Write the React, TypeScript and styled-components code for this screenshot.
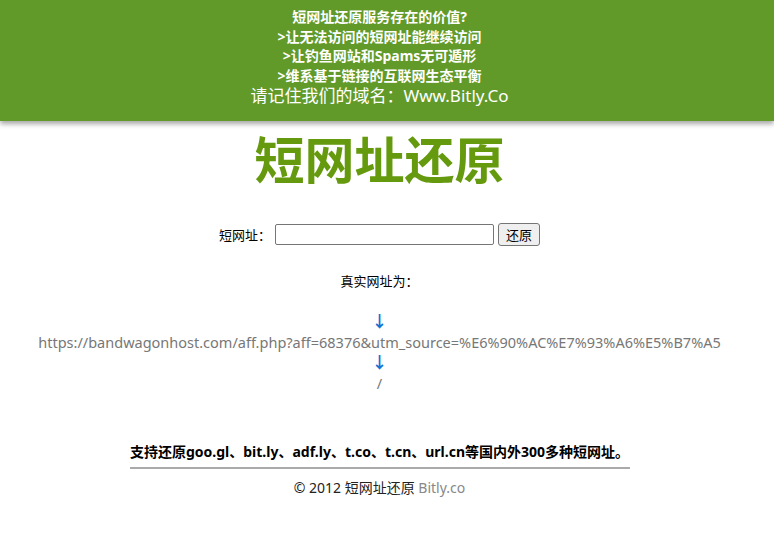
import React, { useState } from 'react';
import { styled, createGlobalStyle } from 'styled-components';

const GlobalStyle = createGlobalStyle`
  html, body {
    margin: 0;
    padding: 0;
    background: #fff;
    font-family: "Noto Sans", "Noto Sans CJK SC", sans-serif;
    color: #000;
  }
`;

// the original page reserves room for a scrollbar on the right
const Header = styled.header`
  background: #629a2a;
  box-shadow: 0 3px 5px rgba(0, 0, 0, 0.35);
  color: #fff;
  text-align: center;
  padding: 7px 15px 14px 0;
`;

const HeaderLine = styled.div<{ big?: boolean }>`
  font-size: ${p => (p.big ? '17px' : '14px')};
  font-weight: ${p => (p.big ? 'normal' : 'bold')};
  line-height: ${p => (p.big ? '22px' : '19.5px')};
`;

const Main = styled.main`
  padding-right: 15px;
`;

const Title = styled.h1`
  margin: 7px 0 0;
  font-size: 50px;
  line-height: 64px;
  font-weight: bold;
  color: #659a0e;
  text-align: center;
`;

const FormRow = styled.form`
  display: flex;
  justify-content: center;
  align-items: center;
  gap: 4px;
  margin-top: 31px;
  font-size: 13px;
`;

const UrlInput = styled.input`
  width: 213px;
  height: 17px;
  border: 1px solid #767676;
  border-radius: 2px;
  padding: 1px 2px;
  font-size: 13px;
`;

const Button = styled.button`
  height: 23px;
  padding: 0 7px;
  border: 1px solid #767676;
  border-radius: 3px;
  background: #efefef;
  font-size: 13px;
  font-family: inherit;
  color: #000;
`;

const Label = styled.div`
  text-align: center;
  font-size: 13px;
  margin-top: 25px;
`;

const Result = styled.div`
  text-align: center;
  margin-top: 21px;
  line-height: 20.6px;
`;

const Arrow = styled.div`
  color: #1173d4;
  font-size: 16px;
  font-weight: bold;
`;

const UrlText = styled.div`
  color: #777;
  font-size: 14.5px;
`;

const Footer = styled.footer`
  width: 500px;
  margin: 49px auto 0;
  text-align: center;
`;

const Support = styled.div`
  font-size: 14px;
  font-weight: bold;
  line-height: 20px;
  padding-bottom: 5px;
  border-bottom: 2px solid #aaa;
`;

const Copy = styled.div`
  font-size: 14px;
  margin-top: 8px;
  color: #222;
`;

const Gray = styled.span`
  color: #888;
`;

export default function App() {
  const [url, setUrl] = useState('');
  return (
    <>
      <GlobalStyle />
      <Header>
        <HeaderLine>短网址还原服务存在的价值?</HeaderLine>
        <HeaderLine>&gt;让无法访问的短网址能继续访问</HeaderLine>
        <HeaderLine>&gt;让钓鱼网站和Spams无可遁形</HeaderLine>
        <HeaderLine>&gt;维系基于链接的互联网生态平衡</HeaderLine>
        <HeaderLine big>请记住我们的域名：Www.Bitly.Co</HeaderLine>
      </Header>
      <Main>
        <Title>短网址还原</Title>
        <FormRow onSubmit={e => e.preventDefault()}>
          <span>短网址：</span>
          <UrlInput value={url} onChange={e => setUrl(e.target.value)} />
          <Button type="submit">还原</Button>
        </FormRow>
        <Label>真实网址为：</Label>
        <Result>
          <Arrow>↓</Arrow>
          <UrlText>https://bandwagonhost.com/aff.php?aff=68376&amp;utm_source=%E6%90%AC%E7%93%A6%E5%B7%A5</UrlText>
          <Arrow>↓</Arrow>
          <UrlText>/</UrlText>
        </Result>
        <Footer>
          <Support>支持还原goo.gl、bit.ly、adf.ly、t.co、t.cn、url.cn等国内外300多种短网址。</Support>
          <Copy>© 2012 短网址还原 <Gray>Bitly.co</Gray></Copy>
        </Footer>
      </Main>
    </>
  );
}
